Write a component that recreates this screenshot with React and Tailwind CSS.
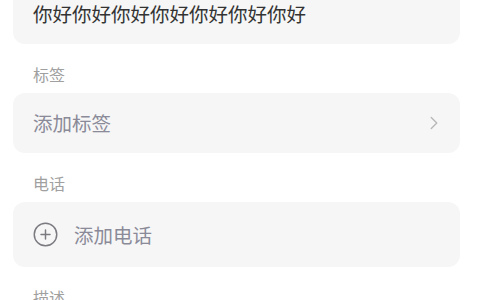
import { ChevronRight, CirclePlus } from 'lucide-react';

const font = { fontFamily: '"Noto Sans CJK SC", "Noto Sans", sans-serif' };

function SectionLabel({ children }) {
  return <p className="mt-[19px] mb-[8px] px-5 text-[16px] leading-[22px] text-[#a0a0a0]">{children}</p>;
}

export default function App() {
  return (
    <div className="h-[300px] overflow-hidden bg-white pr-[20px] pl-[13px]" style={font}>
      {/* 名称（上方已滚出） */}
      <div className="-mt-[20px] rounded-[12px] bg-[#f6f6f6] px-5 pt-[20px] pb-[16px]">
        <p className="text-[19.5px] leading-[28px] text-[#333333]">你好你好你好你好你好你好你好</p>
      </div>

      <SectionLabel>标签</SectionLabel>
      <button
        type="button"
        className="flex h-[60px] w-full items-center justify-between rounded-[12px] bg-[#f6f6f6] pr-[15px] pl-5 text-left"
      >
        <span className="text-[19.5px] text-[#8a8a98]">添加标签</span>
        <ChevronRight size={22} strokeWidth={1.5} className="text-[#b8b8b8]" />
      </button>

      <SectionLabel>电话</SectionLabel>
      <button
        type="button"
        className="flex h-[65px] w-full items-center gap-[15px] rounded-[12px] bg-[#f6f6f6] px-[19px] text-left"
      >
        <CirclePlus size={27} strokeWidth={1.3} className="text-[#7a7a80]" />
        <span className="text-[19.5px] text-[#8a8a98]">添加电话</span>
      </button>

      <SectionLabel>描述</SectionLabel>
    </div>
  );
}
